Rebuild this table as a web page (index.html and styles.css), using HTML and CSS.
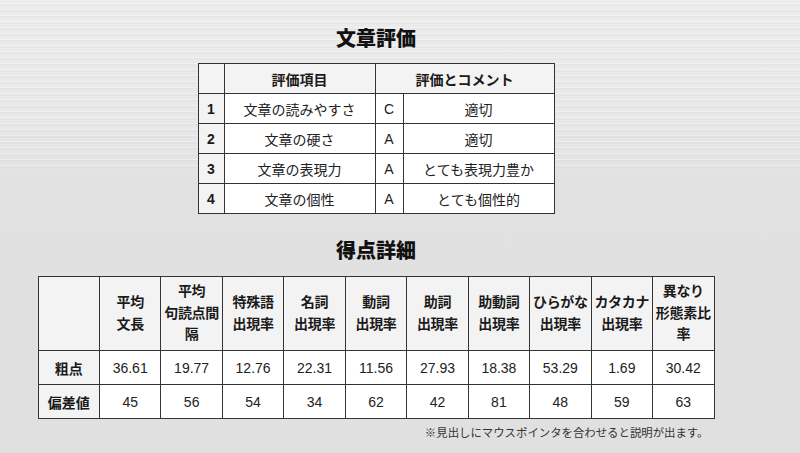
FILE: index.html
```html
<!DOCTYPE html>
<html lang="ja">
<head>
<meta charset="utf-8">
<title>文章評価</title>
<link rel="stylesheet" href="styles.css">
</head>
<body>
<main class="page">
  <h2 class="title title-first">文章評価</h2>
  <table class="eval">
    <colgroup><col class="c-num"><col class="c-item"><col class="c-grade"><col class="c-comment"></colgroup>
    <thead>
      <tr><th></th><th>評価項目</th><th colspan="2">評価とコメント</th></tr>
    </thead>
    <tbody>
      <tr><th>1</th><td>文章の読みやすさ</td><td>C</td><td>適切</td></tr>
      <tr><th>2</th><td>文章の硬さ</td><td>A</td><td>適切</td></tr>
      <tr><th>3</th><td>文章の表現力</td><td>A</td><td>とても表現力豊か</td></tr>
      <tr><th>4</th><td>文章の個性</td><td>A</td><td>とても個性的</td></tr>
    </tbody>
  </table>

  <h2 class="title title-second">得点詳細</h2>
  <div class="detail-wrap">
    <table class="detail">
      <thead>
        <tr>
          <th></th>
          <th>平均<br>文長</th>
          <th>平均<br>句読点間<br>隔</th>
          <th>特殊語<br>出現率</th>
          <th>名詞<br>出現率</th>
          <th>動詞<br>出現率</th>
          <th>助詞<br>出現率</th>
          <th>助動詞<br>出現率</th>
          <th>ひらがな<br>出現率</th>
          <th>カタカナ<br>出現率</th>
          <th>異なり<br>形態素比<br>率</th>
        </tr>
      </thead>
      <tbody>
        <tr><th>粗点</th><td>36.61</td><td>19.77</td><td>12.76</td><td>22.31</td><td>11.56</td><td>27.93</td><td>18.38</td><td>53.29</td><td>1.69</td><td>30.42</td></tr>
        <tr><th>偏差値</th><td>45</td><td>56</td><td>54</td><td>34</td><td>62</td><td>42</td><td>81</td><td>48</td><td>59</td><td>63</td></tr>
      </tbody>
    </table>
    <p class="note">※見出しにマウスポインタを合わせると説明が出ます。</p>
  </div>
</main>
</body>
</html>
```

FILE: styles.css
```css
html, body {
  margin: 0;
  padding: 0;
}
body {
  width: 800px;
  height: 453px;
  overflow: hidden;
  font-family: "Liberation Sans", "Noto Sans CJK JP", sans-serif;
  color: #222;
  background:
    repeating-linear-gradient(to bottom, rgba(255,255,255,0) 0px, rgba(255,255,255,0) 3px, rgba(255,255,255,0.35) 3px, rgba(255,255,255,0.35) 4px, rgba(0,0,0,0.015) 4px, rgba(0,0,0,0.015) 6px) 0 0 / 100% 170px no-repeat,
    linear-gradient(to bottom, #ececec 0px, #e8e8e8 120px, #e1e1e1 190px, #e0e0e0 453px);
}
.page {
  width: 752px;
  display: flex;
  flex-direction: column;
  align-items: center;
  padding-top: 24px;
}
.title {
  margin: 0;
  font-size: 20px;
  line-height: 28px;
  font-weight: 900;
  color: #111;
  font-family: "Noto Sans CJK JP", sans-serif;
}
.title-first {
  margin-bottom: 11px;
}
.title-second {
  margin-top: 22px;
  margin-bottom: 12px;
}
table {
  border-collapse: collapse;
  table-layout: fixed;
  font-size: 14px;
}
th, td {
  border: 1px solid #333;
  text-align: center;
  padding: 0;
  font-family: "Liberation Sans", "Noto Sans CJK JP", sans-serif;
}
th {
  background: #f3f3f3;
  font-weight: bold;
  color: #1a1a1a;
}
td {
  background: #fff;
  color: #222;
}
.eval {
  width: 357px;
}
.eval .c-num { width: 26px; }
.eval .c-item { width: 151px; }
.eval .c-grade { width: 28px; }
.eval .c-comment { width: 151px; }
.eval th, .eval td {
  height: 29px;
}
.detail-wrap {
  display: flex;
  flex-direction: column;
  align-items: stretch;
}
.detail {
  width: 677px;
}
.detail thead th {
  height: 73px;
  line-height: 21.5px;
  white-space: nowrap;
  letter-spacing: -0.3px;
}
.detail tbody th, .detail tbody td {
  height: 33px;
}
.note {
  margin: 5px 0 0;
  padding-right: 6px;
  text-align: right;
  font-size: 11.4px;
  line-height: 16px;
  color: #333;
  font-family: "Noto Sans CJK JP", sans-serif;
}
```
